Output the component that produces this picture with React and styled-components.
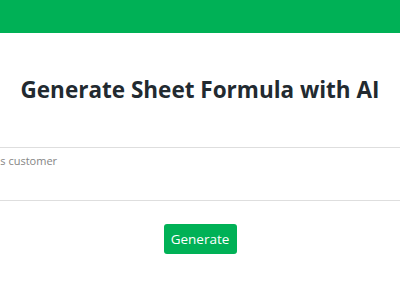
import React from "react";
import styled, { createGlobalStyle } from "styled-components";

const Global = createGlobalStyle`
  html, body { margin: 0; padding: 0; background: #fff; overflow: hidden; }
  body { font-family: "Open Sans", "Noto Sans", sans-serif; }
`;

const TopBar = styled.header`
  height: 33px;
  background: #00b156;
`;

const Main = styled.main`
  display: flex;
  flex-direction: column;
  align-items: center;
  padding-top: 42px;
`;

const Title = styled.h1`
  margin: 0;
  font-size: 22.5px;
  font-weight: 700;
  color: #222a30;
  white-space: nowrap;
  line-height: 30px;
`;

const Field = styled.textarea`
  box-sizing: border-box;
  flex: none;
  width: 686px;
  height: 54px;
  margin-top: 42px;
  padding: 5px 10px;
  border: 1px solid #dedede;
  border-radius: 2px;
  font-family: "Open Sans", "Noto Sans", sans-serif;
  font-size: 11px;
  line-height: 16px;
  resize: none;
  outline: none;
  &::placeholder { color: #858585; }
`;

const Button = styled.button`
  margin-top: 23px;
  width: 73px;
  height: 30px;
  border: none;
  border-radius: 3px;
  background: #00b156;
  color: #fff;
  font-family: "Open Sans", "Noto Sans", sans-serif;
  font-size: 13.5px;
  cursor: pointer;
`;

export default function App() {
  return (
    <>
      <Global />
      <TopBar />
      <Main>
        <Title>Generate Sheet Formula with AI</Title>
        <Field placeholder="e.g. Sum total sales for this customer" />
        <Button>Generate</Button>
      </Main>
    </>
  );
}
